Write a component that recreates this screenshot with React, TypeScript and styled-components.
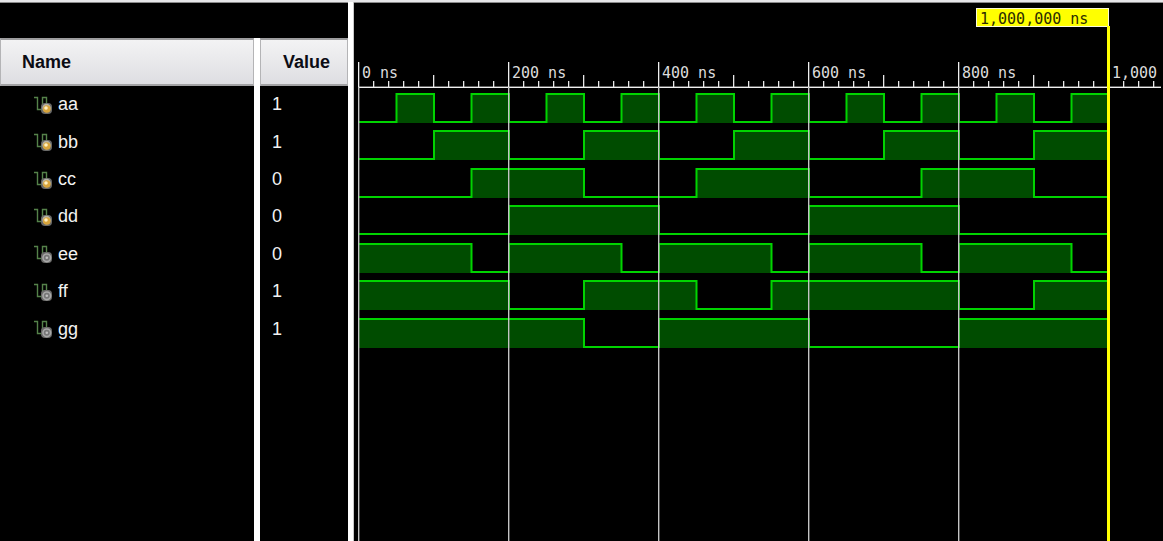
import React from 'react';
import styled, { createGlobalStyle } from 'styled-components';

const NS = 0.75;
const ORIGIN = 5;
const CURSOR = 1000;
const x = (t: number) => ORIGIN + t * NS;

type Signal = { name: string; value: string; kind: 'in' | 'out'; levels: string };

// One character per 50 ns.
const signals: Signal[] = [
  { name: 'aa', value: '1', kind: 'in', levels: '01010101010101010101' },
  { name: 'bb', value: '1', kind: 'in', levels: '00110011001100110011' },
  { name: 'cc', value: '0', kind: 'in', levels: '00011100011100011100' },
  { name: 'dd', value: '0', kind: 'in', levels: '00001111000011110000' },
  { name: 'ee', value: '0', kind: 'out', levels: '11101110111011101110' },
  { name: 'ff', value: '1', kind: 'out', levels: '11110011100111110011' },
  { name: 'gg', value: '1', kind: 'out', levels: '11111100111100001111' },
];

const GlobalStyle = createGlobalStyle`
  * { box-sizing: border-box; }
  body { margin: 0; background: #000; font-family: "Liberation Sans", Arial, sans-serif; }
`;

const Viewer = styled.main`
  display: flex;
  min-height: 100vh;
  border-top: 2px solid #e6e6e8;
  background: #000;
  color: #f2f2f2;
  font-size: 18px;
`;

const SignalPanel = styled.section`
  flex: none;
  display: flex;
  flex-direction: column;
  border-top: 1px solid #8a8a8a;
  padding-top: 35px;
`;

const SignalTable = styled.table`
  flex: 1;
  display: flex;
  flex-direction: column;
  background: linear-gradient(to right, transparent 254px, #fff 254px, #fff 260px, transparent 260px);
`;

const HeadRow = styled.tr`
  display: grid;
  grid-template-columns: 254px 88px;
  column-gap: 6px;
  height: 48px;
`;

const HeadCell = styled.th<{ $inset: number }>`
  display: flex;
  align-items: center;
  padding-left: ${(p) => p.$inset}px;
  border: 1px solid #b4b4b6;
  border-top: 2px solid #9c9c9e;
  border-bottom: 2px solid #a2a2a4;
  background: linear-gradient(#f3f3f4, #dedee2);
  color: #0c0c14;
  font-weight: bold;
`;

const Body = styled.tbody`
  display: grid;
  grid-template-rows: repeat(7, 1fr);
  height: 262px;
`;

const SignalRow = styled.tr`
  display: grid;
  grid-template-columns: 254px 88px;
  column-gap: 6px;
  align-items: center;
`;

const NameCell = styled.td`
  display: flex;
  align-items: center;
  gap: 6px;
  padding: 0 0 0 34px;
`;

const ValueCell = styled.td`
  padding: 0 0 0 12px;
`;

const Splitter = styled.div`
  flex: none;
  width: 6px;
  border-right: 1px solid #c8c8c8;
  background: #fff;
`;

const WavePanel = styled.section`
  position: relative;
  flex: 1;
  min-width: 0;
  overflow: hidden;
  border-top: 1px solid #8a8a8a;
  font: 15px "DejaVu Sans Mono", "Liberation Mono", monospace;
`;

const CursorStrip = styled.div`
  width: ${x(CURSOR)}px;
  display: flex;
  justify-content: flex-end;
  padding-top: 5px;
`;

const CursorFlag = styled.output`
  width: 133px;
  height: 19px;
  padding-left: 3px;
  border: 1px solid #fafad8;
  background: #ff0;
  color: #2c2c00;
  line-height: 20px;
`;

const Scale = styled.div`
  height: 60px;
  padding: 36px 0 0 ${ORIGIN}px;
  display: flex;
  overflow: hidden;
`;

const ScaleLabel = styled.span`
  flex: none;
  width: ${200 * NS}px;
  padding-left: 3px;
  color: #dcdcdc;
  line-height: 20px;
  white-space: pre;
`;

const WaveRows = styled.div`
  display: grid;
  grid-template-rows: repeat(7, 1fr);
  height: 262px;
`;

const WaveSvg = styled.svg`
  display: block;
  width: 100%;
  height: 37px;
`;

const Overlay = styled.svg`
  position: absolute;
  inset: 0;
  width: 100%;
  height: 100%;
  pointer-events: none;
`;

function SignalIcon({ kind }: { kind: 'in' | 'out' }) {
  return (
    <svg width="18" height="18" viewBox="0 0 18 18" aria-hidden="true">
      <path d="M0 1.5H3.5V13.5H8.5V1.5H12.5V8" fill="none" stroke="#55824a" strokeWidth="1.4" />
      <rect x="7" y="7" width="11" height="11" rx="4" fill="#6a6a68" />
      {kind === 'in' ? (
        <>
          <circle cx="12.5" cy="12" r="4.2" fill="#b4b2a8" />
          <circle cx="12.8" cy="13" r="3.8" fill="#d9a53c" />
          <circle cx="12" cy="12" r="1.8" fill="#fff0c0" />
        </>
      ) : (
        <>
          <circle cx="12.8" cy="12.8" r="3.8" fill="#777" stroke="#a8a8a8" strokeWidth="1.6" />
          <circle cx="12.8" cy="12.8" r="1.3" fill="#c0c0c0" />
        </>
      )}
    </svg>
  );
}

function Wave({ levels }: { levels: string }) {
  const top = 6;
  const low = 35;
  const level = (c: string) => (c === '1' ? top + 1 : low);
  let line = `M${x(0)} ${level(levels[0])}`;
  const blocks: { from: number; to: number }[] = [];
  levels.split('').forEach((c, i) => {
    line += `V${level(c)}H${x((i + 1) * 50)}`;
    if (c === '1') {
      const last = blocks[blocks.length - 1];
      if (last && last.to === i) last.to = i + 1;
      else blocks.push({ from: i, to: i + 1 });
    }
  });
  return (
    <WaveSvg aria-hidden="true">
      {blocks.map((b) => (
        <rect key={b.from} x={x(b.from * 50)} y={top} width={(b.to - b.from) * 50 * NS} height={low - top + 1} fill="#004c00" />
      ))}
      <path d={line} fill="none" stroke="#00d400" strokeWidth="2" />
    </WaveSvg>
  );
}

function Grid() {
  const axis = 84;
  const ticks = Array.from({ length: 54 }, (_, i) => i * 20).filter((t) => t % 200);
  const majors = [0, 200, 400, 600, 800, 1000];
  return (
    <Overlay aria-hidden="true">
      <rect x={ORIGIN - 1} y={axis - 0.4} width={803} height="1.4" fill="#f0f0f0" />
      {ticks.map((t) => {
        const h = t % 100 === 0 ? 12 : 6;
        return <rect key={t} x={Math.round(x(t)) - 1} y={axis - h} width="1.3" height={h} fill="#e8e8e8" />;
      })}
      {majors.map((t) => (
        <React.Fragment key={t}>
          <rect x={x(t) - 1} y={axis} width="1.4" height="100%" fill="#c4c4c4" />
          <rect x={x(t) - 1} y={axis - 25} width="1.3" height="25" fill="#f0f0f0" />
        </React.Fragment>
      ))}
      <rect x={x(CURSOR) - 2} y="23" width="3" height="100%" fill="#ff0" />
    </Overlay>
  );
}

export default function App() {
  return (
    <>
      <GlobalStyle />
      <Viewer>
        <SignalPanel>
          <SignalTable>
            <thead>
              <HeadRow>
                <HeadCell $inset={21}>Name</HeadCell>
                <HeadCell $inset={22}>Value</HeadCell>
              </HeadRow>
            </thead>
            <Body>
              {signals.map((s) => (
                <SignalRow key={s.name}>
                  <NameCell>
                    <SignalIcon kind={s.kind} />
                    {s.name}
                  </NameCell>
                  <ValueCell>{s.value}</ValueCell>
                </SignalRow>
              ))}
            </Body>
          </SignalTable>
        </SignalPanel>
        <Splitter />
        <WavePanel>
          <CursorStrip>
            <CursorFlag>1,000,000 ns</CursorFlag>
          </CursorStrip>
          <Scale>
            {['0 ns', '200 ns', '400 ns', '600 ns', '800 ns', '1,000'].map((l) => (
              <ScaleLabel key={l}>{l}</ScaleLabel>
            ))}
          </Scale>
          <WaveRows>
            {signals.map((s) => (
              <Wave key={s.name} levels={s.levels} />
            ))}
          </WaveRows>
          <Grid />
        </WavePanel>
      </Viewer>
    </>
  );
}
